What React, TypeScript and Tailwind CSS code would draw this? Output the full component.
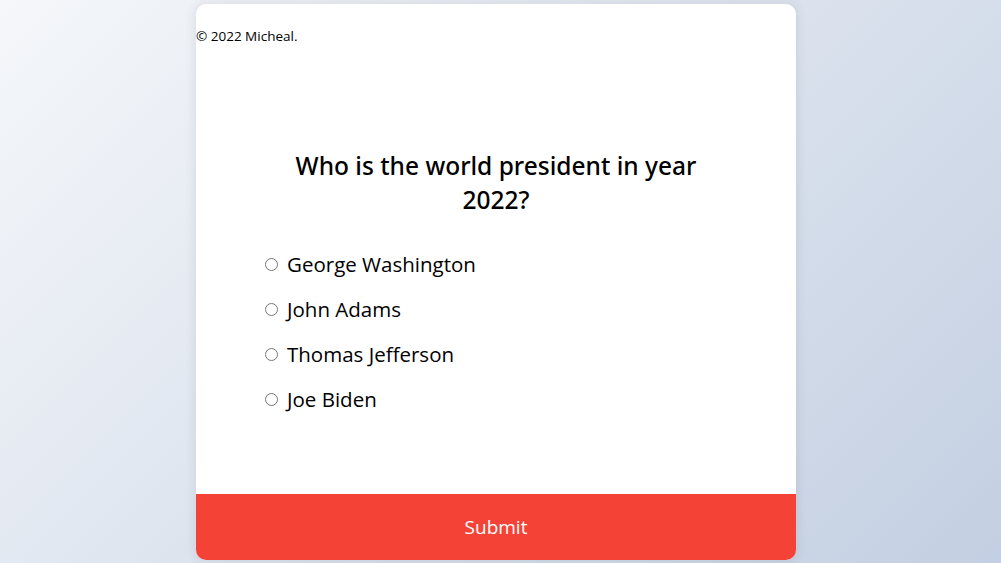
import React from "react";

const options = ["George Washington", "John Adams", "Thomas Jefferson", "Joe Biden"];

export default function App() {
  return (
    <div
      className="flex h-[563px] w-full justify-center overflow-hidden bg-[linear-gradient(135deg,#f5f7fa_0%,#c3cfe2_100%)] pt-[4px] pr-[9px]"
      style={{ fontFamily: '"Open Sans", "Noto Sans", sans-serif' }}
    >
      <div className="flex h-[556px] w-[600px] flex-col overflow-hidden rounded-[10px] bg-white shadow-[0_0_10px_2px_rgba(100,100,111,0.12)]">
        <p className="mt-[22px] text-[13.5px] leading-5 font-medium text-black">© 2022 Micheal.</p>
        <div className="px-16">
          <h2
            className="mx-auto mt-[103px] max-w-[440px] text-center text-[24.5px] leading-[34px] font-medium text-black"
            style={{ fontFamily: '"Noto Sans", "Open Sans", sans-serif' }}
          >
            Who is the world president in year 2022?
          </h2>
          <ul className="mt-[32px] flex flex-col gap-[15px]">
            {options.map((o) => (
              <li key={o} className="flex items-center text-[20.5px] leading-[30px] text-black">
                <input type="radio" name="answer" className="ml-[5px] mr-[9px] h-[13px] w-[13px]" />
                <label>{o}</label>
              </li>
            ))}
          </ul>
        </div>
        <button className="mt-auto h-[66px] w-full bg-[#f44336] text-[19px] text-white">Submit</button>
      </div>
    </div>
  );
}
